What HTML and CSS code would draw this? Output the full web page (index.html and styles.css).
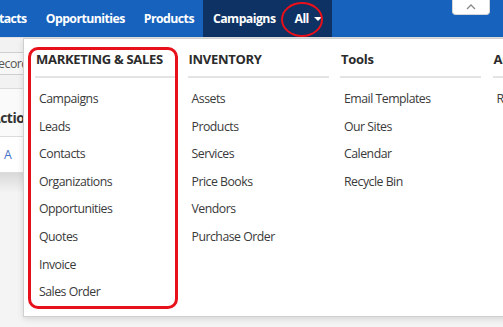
FILE: index.html
```html
<!DOCTYPE html>
<html lang="en">
<head>
    <meta charset="UTF-8">
    <meta name="viewport" content="width=device-width, initial-scale=1.0">
    <title>All Modules Menu</title>
    <link rel="stylesheet" href="styles.css">
</head>
<body>
    <header class="topbar">
        <ul class="modules">
            <li>Contacts</li>
            <li>Opportunities</li>
            <li>Products</li>
            <li class="active">Campaigns</li>
            <li class="active all">All <span class="caret"></span></li>
        </ul>
        <button class="collapse" type="button">
            <svg width="10" height="6" viewBox="0 0 10 6"><path d="M1 5 L5 1 L9 5" fill="none" stroke="#8a8a8a" stroke-width="1.3"/></svg>
        </button>
        <span class="mark-circle"></span>
    </header>

    <main class="page">
        <div class="page-row toolbar">
            <span class="btn">Records</span>
        </div>
        <div class="page-row heading">Actions</div>
        <div class="page-row links"><span>A</span></div>
        <div class="page-shade"></div>

        <!-- dropdown for "All" -->
        <div class="menu">
            <span class="mark-box"></span>
            <div class="menu-col">
                <h4>MARKETING &amp; SALES</h4>
                <ul>
                    <li>Campaigns</li>
                    <li>Leads</li>
                    <li>Contacts</li>
                    <li>Organizations</li>
                    <li>Opportunities</li>
                    <li>Quotes</li>
                    <li>Invoice</li>
                    <li>Sales Order</li>
                </ul>
            </div>
            <div class="menu-col">
                <h4>INVENTORY</h4>
                <ul>
                    <li>Assets</li>
                    <li>Products</li>
                    <li>Services</li>
                    <li>Price Books</li>
                    <li>Vendors</li>
                    <li>Purchase Order</li>
                </ul>
            </div>
            <div class="menu-col">
                <h4>Tools</h4>
                <ul>
                    <li>Email Templates</li>
                    <li>Our Sites</li>
                    <li>Calendar</li>
                    <li>Recycle Bin</li>
                </ul>
            </div>
            <div class="menu-col">
                <h4>Analytics</h4>
                <ul>
                    <li>Reports</li>
                </ul>
            </div>
        </div>
    </main>
</body>
</html>
```

FILE: styles.css
```css
html, body {
    margin: 0;
    padding: 0;
    width: 503px;
    height: 327px;
    overflow: hidden;
    font-family: 'Open Sans', sans-serif;
    font-size: 12.3px;
    letter-spacing: -0.5px;
    background: #ffffff;
}

.topbar {
    position: relative;
    display: flex;
    align-items: stretch;
    height: 37px;
    background: #1762bd;
}

.modules {
    display: flex;
    list-style: none;
    margin: 0 0 0 -32.5px;
    padding: 0;
}

.modules li {
    display: flex;
    align-items: center;
    padding: 0 9.5px;
    color: #ffffff;
    font-weight: 700;
    letter-spacing: -0.55px;
}

.modules li.active {
    background: #0d3263;
}

.modules li.all {
    padding-right: 10px;
}

.caret {
    display: inline-block;
    margin-left: 5px;
    border-left: 4px solid transparent;
    border-right: 4px solid transparent;
    border-top: 4px solid #ffffff;
}

.collapse {
    align-self: flex-start;
    margin: 0 13px 0 auto;
    width: 38px;
    height: 15px;
    padding: 0;
    border: 1px solid #d6d6d6;
    border-top: none;
    border-radius: 0 0 4px 4px;
    background: #ffffff;
    display: flex;
    align-items: center;
    justify-content: center;
}

.mark-circle {
    position: absolute;
    left: 281px;
    top: 2px;
    width: 38px;
    height: 31px;
    border: 2px solid #e8101a;
    border-radius: 50%;
}

.page {
    position: relative;
    height: 290px;
    background: #f4f4f4;
}

.page-row {
    display: flex;
    align-items: center;
    border-bottom: 1px solid #dcdcdc;
    background: #fafafa;
}

.toolbar {
    height: 50px;
    background: #f2f2f2;
    border-top: 1px solid #e2e2e2;
}

.btn {
    margin-left: -18px;
    padding: 2px 8px;
    border: 1px solid #cfcfcf;
    border-radius: 3px;
    background: #f7f7f7;
    color: #555;
}

.heading {
    box-sizing: border-box;
    height: 48px;
    padding-top: 10px;
    font-weight: 700;
    color: #333;
    font-size: 14px;
    text-indent: -9px;
}

.links {
    height: 35px;
    background: #ffffff;
}

.links span {
    margin-left: 4px;
    color: #3f72c4;
}

.page-shade {
    height: 20px;
    background: linear-gradient(#d9d9d9, #f4f4f4);
}

.menu {
    position: absolute;
    left: 23px;
    top: 1px;
    width: 620px;
    height: 279px;
    box-sizing: border-box;
    padding: 0 0 0 11px;
    background: #ffffff;
    border: 1px solid #d0d0d0;
    box-shadow: 0 2px 6px rgba(0, 0, 0, 0.12);
    display: grid;
    grid-template-columns: repeat(4, 141px);
    column-gap: 11.5px;
    align-content: start;
}

.menu-col h4 {
    margin: 0;
    padding: 11px 0 8px 1px;
    font-size: 13px;
    font-weight: 700;
    letter-spacing: -0.3px;
    color: #2b2b2b;
    line-height: 18px;
    border-bottom: 2px solid #e4e4e4;
    white-space: nowrap;
}

.menu-col ul {
    list-style: none;
    margin: 7px 0 0 0;
    padding: 0;
}

.menu-col li {
    padding-left: 4px;
    line-height: 27.6px;
    color: #3a3a3a;
    white-space: nowrap;
}

.mark-box {
    position: absolute;
    left: 4px;
    top: 8px;
    width: 144px;
    height: 256px;
    border: 3px solid #e8101a;
    border-radius: 10px;
}
```
